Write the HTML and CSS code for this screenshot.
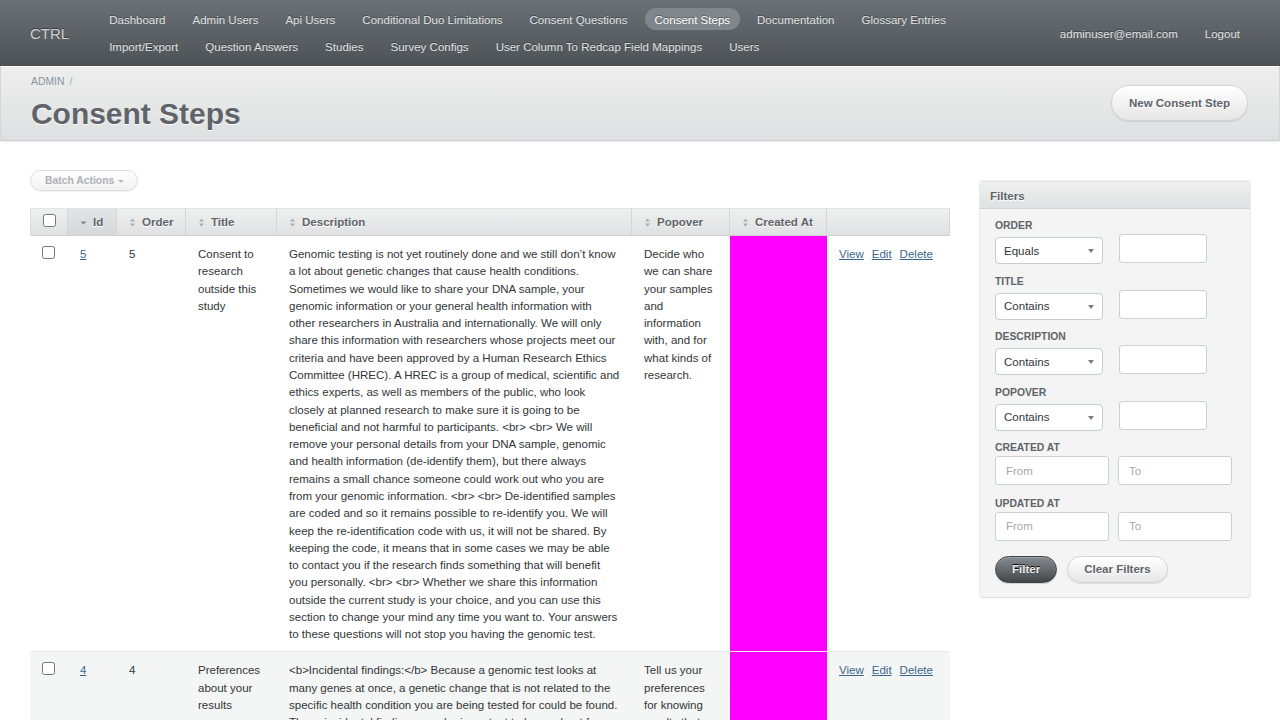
FILE: index.html
```html
<!DOCTYPE html>
<html lang="en">
<head>
<meta charset="utf-8">
<title>Consent Steps | CTRL</title>
<link rel="stylesheet" href="styles.css">
</head>
<body>
<header class="header">
  <h1 class="site-title">CTRL</h1>
  <ul class="tabs">
    <li><a href="#">Dashboard</a></li>
    <li><a href="#">Admin Users</a></li>
    <li><a href="#">Api Users</a></li>
    <li><a href="#">Conditional Duo Limitations</a></li>
    <li><a href="#">Consent Questions</a></li>
    <li class="current"><a href="#">Consent Steps</a></li>
    <li><a href="#">Documentation</a></li>
    <li><a href="#">Glossary Entries</a></li>
    <li><a href="#">Import/Export</a></li>
    <li><a href="#">Question Answers</a></li>
    <li><a href="#">Studies</a></li>
    <li><a href="#">Survey Configs</a></li>
    <li><a href="#">User Column To Redcap Field Mappings</a></li>
    <li><a href="#">Users</a></li>
  </ul>
  <ul class="tabs utility-nav">
    <li><a href="#">adminuser@email.com</a></li>
    <li><a href="#">Logout</a></li>
  </ul>
</header>

<div class="title-bar">
  <div class="title-left">
    <div class="breadcrumbs"><a href="#">Admin</a><span class="sep">/</span></div>
    <h2 class="page-title">Consent Steps</h2>
  </div>
  <div class="action-items"><a class="btn" href="#">New Consent Step</a></div>
</div>

<div class="content">
  <main class="main">
    <div class="table-tools">
      <a class="batch-btn" href="#">Batch Actions <span class="caret"></span></a>
    </div>
    <table class="index-table">
      <colgroup>
        <col class="c-check"><col class="c-id"><col class="c-order"><col class="c-title"><col class="c-desc"><col class="c-pop"><col class="c-created"><col class="c-actions">
      </colgroup>
      <thead>
        <tr>
          <th class="th-check"><input type="checkbox"></th>
          <th class="sorted"><svg class="sort" width="7" height="9" viewBox="0 0 7 9"><path d="M0.5 3.5H6.5L3.5 6.5Z" fill="#7f868c"/></svg>Id</th>
          <th><svg class="sort" width="7" height="9" viewBox="0 0 7 9"><path d="M1 3.5H6L3.5 0.5Z M1 5.5H6L3.5 8.5Z" fill="#a9adb1"/></svg>Order</th>
          <th><svg class="sort" width="7" height="9" viewBox="0 0 7 9"><path d="M1 3.5H6L3.5 0.5Z M1 5.5H6L3.5 8.5Z" fill="#a9adb1"/></svg>Title</th>
          <th><svg class="sort" width="7" height="9" viewBox="0 0 7 9"><path d="M1 3.5H6L3.5 0.5Z M1 5.5H6L3.5 8.5Z" fill="#a9adb1"/></svg>Description</th>
          <th><svg class="sort" width="7" height="9" viewBox="0 0 7 9"><path d="M1 3.5H6L3.5 0.5Z M1 5.5H6L3.5 8.5Z" fill="#a9adb1"/></svg>Popover</th>
          <th><svg class="sort" width="7" height="9" viewBox="0 0 7 9"><path d="M1 3.5H6L3.5 0.5Z M1 5.5H6L3.5 8.5Z" fill="#a9adb1"/></svg>Created At</th>
          <th></th>
        </tr>
      </thead>
      <tbody>
        <tr class="odd">
          <td><input type="checkbox"></td>
          <td><a href="#">5</a></td>
          <td>5</td>
          <td>Consent to research outside this study</td>
          <td>Genomic testing is not yet routinely done and we still don’t know a lot about genetic changes that cause health conditions. Sometimes we would like to share your DNA sample, your genomic information or your general health information with other researchers in Australia and internationally. We will only share this information with researchers whose projects meet our criteria and have been approved by a Human Research Ethics Committee (HREC). A HREC is a group of medical, scientific and ethics experts, as well as members of the public, who look closely at planned research to make sure it is going to be beneficial and not harmful to participants. &lt;br&gt; &lt;br&gt; We will remove your personal details from your DNA sample, genomic and health information (de-identify them), but there always remains a small chance someone could work out who you are from your genomic information. &lt;br&gt; &lt;br&gt; De-identified samples are coded and so it remains possible to re-identify you. We will keep the re-identification code with us, it will not be shared. By keeping the code, it means that in some cases we may be able to contact you if the research finds something that will benefit you personally. &lt;br&gt; &lt;br&gt; Whether we share this information outside the current study is your choice, and you can use this section to change your mind any time you want to. Your answers to these questions will not stop you having the genomic test.</td>
          <td>Decide who we can share your samples and information with, and for what kinds of research.</td>
          <td class="created"></td>
          <td><div class="member-links"><a href="#">View</a><a href="#">Edit</a><a href="#">Delete</a></div></td>
        </tr>
        <tr class="even">
          <td><input type="checkbox"></td>
          <td><a href="#">4</a></td>
          <td>4</td>
          <td>Preferences about your results</td>
          <td>&lt;b&gt;Incidental findings:&lt;/b&gt; Because a genomic test looks at many genes at once, a genetic change that is not related to the specific health condition you are being tested for could be found. These incidental findings may be important to know about for your health and the health of your family.</td>
          <td>Tell us your preferences for knowing results that may be found.</td>
          <td class="created"></td>
          <td><div class="member-links"><a href="#">View</a><a href="#">Edit</a><a href="#">Delete</a></div></td>
        </tr>
      </tbody>
    </table>
  </main>

  <aside class="sidebar">
    <div class="panel">
      <h3>Filters</h3>
      <div class="panel-body">
        <div class="filter">
          <label>Order</label>
          <div class="filter-row">
            <span class="select"><select><option>Equals</option></select></span>
            <input class="text-input" type="text">
          </div>
        </div>
        <div class="filter">
          <label>Title</label>
          <div class="filter-row">
            <span class="select"><select><option>Contains</option></select></span>
            <input class="text-input" type="text">
          </div>
        </div>
        <div class="filter">
          <label>Description</label>
          <div class="filter-row">
            <span class="select"><select><option>Contains</option></select></span>
            <input class="text-input" type="text">
          </div>
        </div>
        <div class="filter">
          <label>Popover</label>
          <div class="filter-row">
            <span class="select"><select><option>Contains</option></select></span>
            <input class="text-input" type="text">
          </div>
        </div>
        <div class="filter">
          <label>Created At</label>
          <div class="date-row">
            <input class="date-input" type="text" placeholder="From">
            <input class="date-input" type="text" placeholder="To">
          </div>
        </div>
        <div class="filter">
          <label>Updated At</label>
          <div class="date-row">
            <input class="date-input" type="text" placeholder="From">
            <input class="date-input" type="text" placeholder="To">
          </div>
        </div>
        <div class="buttons">
          <button class="btn-dark" type="button">Filter</button>
          <button class="btn-light" type="button">Clear Filters</button>
        </div>
      </div>
    </div>
  </aside>
</div>
</body>
</html>
```

FILE: styles.css
```css
* { box-sizing: border-box; }

html, body { margin: 0; padding: 0; }

body {
  font-family: "Liberation Sans", Arial, Helvetica, sans-serif;
  font-size: 11.52px;
  line-height: 1.5;
  color: #323537;
  background: #fff;
}

/* Header */
.header {
  display: flex;
  align-items: center;
  height: 66px;
  padding: 8px 30px 8px 30px;
  background: linear-gradient(#6a7176, #4d5256);
}

.site-title {
  margin: 2px 30px 0 0;
  font-size: 15px;
  font-weight: normal;
  line-height: 20px;
  color: #d0d0d0;
  text-shadow: 0 -1px 0 rgba(0, 0, 0, 0.4);
}

.tabs {
  list-style: none;
  margin: 0;
  padding: 0;
  display: flex;
  flex-wrap: wrap;
  gap: 5px 7px;
  max-width: 900px;
  align-self: flex-start;
}

.tabs a {
  display: block;
  padding: 2px 10px 0 10px;
  line-height: 20px;
  border-radius: 12px;
  color: #e2e3e4;
  text-decoration: none;
  text-shadow: 0 -1px 0 rgba(0, 0, 0, 0.35);
}

.tabs .current a {
  background: #80868b;
  color: #fff;
}

.utility-nav {
  margin-left: auto;
  align-self: center;
  margin-top: 0;
}

/* Title bar */
.title-bar {
  display: flex;
  align-items: center;
  justify-content: space-between;
  height: 75px;
  padding: 9px 31px 7px 30px;
  background: linear-gradient(#eeeeee, #dfe0e1);
  border-left: 1px solid #d6d6d6;
  border-right: 1px solid #d6d6d6;
  border-bottom: 1px solid #c9cbcc;
  box-shadow: inset 0 1px 0 #fafafa, 0 1px 2px rgba(0, 0, 0, 0.08);
}

.title-left { align-self: flex-start; }

.breadcrumbs {
  font-size: 10.37px;
  line-height: 14px;
  text-transform: uppercase;
  color: #8a949e;
}

.breadcrumbs a {
  color: #8a949e;
  text-decoration: none;
}

.breadcrumbs .sep {
  margin-left: 5px;
  color: #a9b0b6;
}

.page-title {
  margin: 7px 0 0 0;
  font-size: 29.95px;
  line-height: 36px;
  font-weight: bold;
  color: #5e6469;
  text-shadow: 0 1px 0 #fff;
}

.action-items { margin-bottom: 2px; }

.btn {
  display: inline-block;
  padding: 10px 17px;
  border-radius: 200px;
  border: 1px solid #d3d3d3;
  background: linear-gradient(#ffffff, #e6e6e6);
  box-shadow: 0 1px 1px rgba(0, 0, 0, 0.1), inset 0 1px 0 #fff;
  font-size: 11.52px;
  line-height: 14px;
  font-weight: bold;
  color: #5e6469;
  text-decoration: none;
  text-shadow: 0 1px 0 #fff;
}

/* Content */
.content {
  display: flex;
  align-items: flex-start;
  gap: 30px;
  padding: 29px 30px;
}

.main { width: 920px; flex: none; }

.sidebar { width: 270px; flex: none; margin-top: 11px; }

.table-tools { margin-bottom: 17px; height: 21px; }

.batch-btn {
  display: inline-flex;
  align-items: center;
  gap: 4px;
  height: 21px;
  padding: 0 13px 0 14px;
  border-radius: 200px;
  border: 1px solid #dcdcdc;
  background: linear-gradient(#ffffff, #f2f2f2);
  box-shadow: 0 1px 1px rgba(0, 0, 0, 0.05);
  font-size: 10.37px;
  font-weight: bold;
  color: #aeb1b4;
  text-decoration: none;
}

.caret {
  width: 0;
  height: 0;
  border-left: 3px solid transparent;
  border-right: 3px solid transparent;
  border-top: 3px solid #b7babd;
  margin-top: 1px;
}

/* Table */
.index-table {
  width: 920px;
  table-layout: fixed;
  border-collapse: separate;
  border-spacing: 0;
}

.c-check { width: 38px; }
.c-id { width: 49px; }
.c-order { width: 69px; }
.c-title { width: 91px; }
.c-desc { width: 355px; }
.c-pop { width: 98px; }
.c-created { width: 97px; }
.c-actions { width: 123px; }

.index-table th {
  height: 28px;
  padding: 7px 12px 6px 12px;
  line-height: 13px;
  text-align: left;
  font-weight: bold;
  color: #5e6469;
  white-space: nowrap;
  background: linear-gradient(#efefef, #dfe1e2);
  border-top: 1px solid #e2e3e4;
  border-bottom: 1px solid #cfd1d2;
  border-right: 1px solid #d3d5d6;
  text-shadow: 0 1px 0 #fff;
}

.index-table th:first-child { border-left: 1px solid #dcdddd; }

.index-table th.sorted { background: linear-gradient(#e3e4e5, #d5d7d9); }

.index-table .th-check input {
  margin: -2px 0 0 0;
  vertical-align: top;
}

.sort {
  vertical-align: -1px;
  margin-right: 6px;
}

.index-table td {
  padding: 10px 12px 8px 12px;
  vertical-align: top;
  border-bottom: 1px solid #e8e9ea;
  line-height: 17.28px;
}

.index-table td input[type="checkbox"] { display: block; margin: 0; }

.index-table tr.even td { background: #f4f5f5; }

.index-table td.created,
.index-table tr.even td.created { background: #ff00ff; }

.index-table a { color: #38678b; text-decoration: underline; }

.member-links { display: flex; gap: 8px; white-space: nowrap; }

/* Sidebar */
.panel {
  background: #f4f4f4;
  border-radius: 3px;
  box-shadow: 0 0 0 1px rgba(0, 0, 0, 0.05), 0 1px 2px rgba(0, 0, 0, 0.1);
}

.panel h3 {
  margin: 0;
  height: 28px;
  padding: 1px 10px 0 10px;
  line-height: 26px;
  font-size: 11.52px;
  font-weight: bold;
  color: #5e6469;
  background: linear-gradient(#efefef, #dfe1e2);
  border-top: 1px solid #e3e4e5;
  border-bottom: 1px solid #cfd1d2;
  border-radius: 3px 3px 0 0;
  text-shadow: 0 1px 0 #fff;
}

.panel-body { padding: 10px 15px 14px 15px; }

.filter { margin-bottom: 11.5px; }

.filter label {
  display: block;
  margin-bottom: 1px;
  font-size: 10.37px;
  line-height: 14px;
  font-weight: bold;
  text-transform: uppercase;
  color: #5e6469;
}

.filter-row {
  display: flex;
  align-items: flex-end;
  gap: 16px;
}

.select {
  position: relative;
  display: block;
  width: 108px;
  height: 27px;
  margin-bottom: -1px;
}

.select select {
  width: 100%;
  height: 27px;
  -webkit-appearance: none;
  appearance: none;
  padding: 0 8px;
  border: 1px solid #c6ccd2;
  border-radius: 4px;
  background: #fff;
  font-family: inherit;
  font-size: 11.52px;
  color: #323537;
}

.select::after {
  content: "";
  position: absolute;
  right: 9px;
  top: 12px;
  border-left: 3.5px solid transparent;
  border-right: 3.5px solid transparent;
  border-top: 4px solid #7c7c7c;
}

.text-input,
.date-input {
  height: 29px;
  border: 1px solid #c9d0d6;
  border-radius: 3px;
  background: #fff;
  padding: 0 10px;
  font-family: inherit;
  font-size: 11.52px;
  color: #323537;
}

.text-input { width: 88px; }

.date-row { display: flex; gap: 9px; }

.date-input { width: 114px; }

.date-input::placeholder { color: #a5a8ab; }

.buttons { display: flex; gap: 10px; margin-top: 15px; }

.btn-dark,
.btn-light {
  height: 27px;
  padding: 0 16px;
  border-radius: 200px;
  font-family: inherit;
  font-size: 11.52px;
  font-weight: bold;
  cursor: pointer;
}

.btn-dark {
  border: 1px solid #3f4346;
  background: linear-gradient(#858c91, #41464a);
  color: #efefef;
  text-shadow: 0 -1px 0 #000;
  box-shadow: 0 1px 1px rgba(0, 0, 0, 0.15), inset 0 1px 0 #9aa0a4;
}

.btn-light {
  border: 1px solid #d3d3d3;
  background: linear-gradient(#ffffff, #e6e6e6);
  color: #5e6469;
  text-shadow: 0 1px 0 #fff;
  box-shadow: 0 1px 1px rgba(0, 0, 0, 0.1), inset 0 1px 0 #fff;
}
```
